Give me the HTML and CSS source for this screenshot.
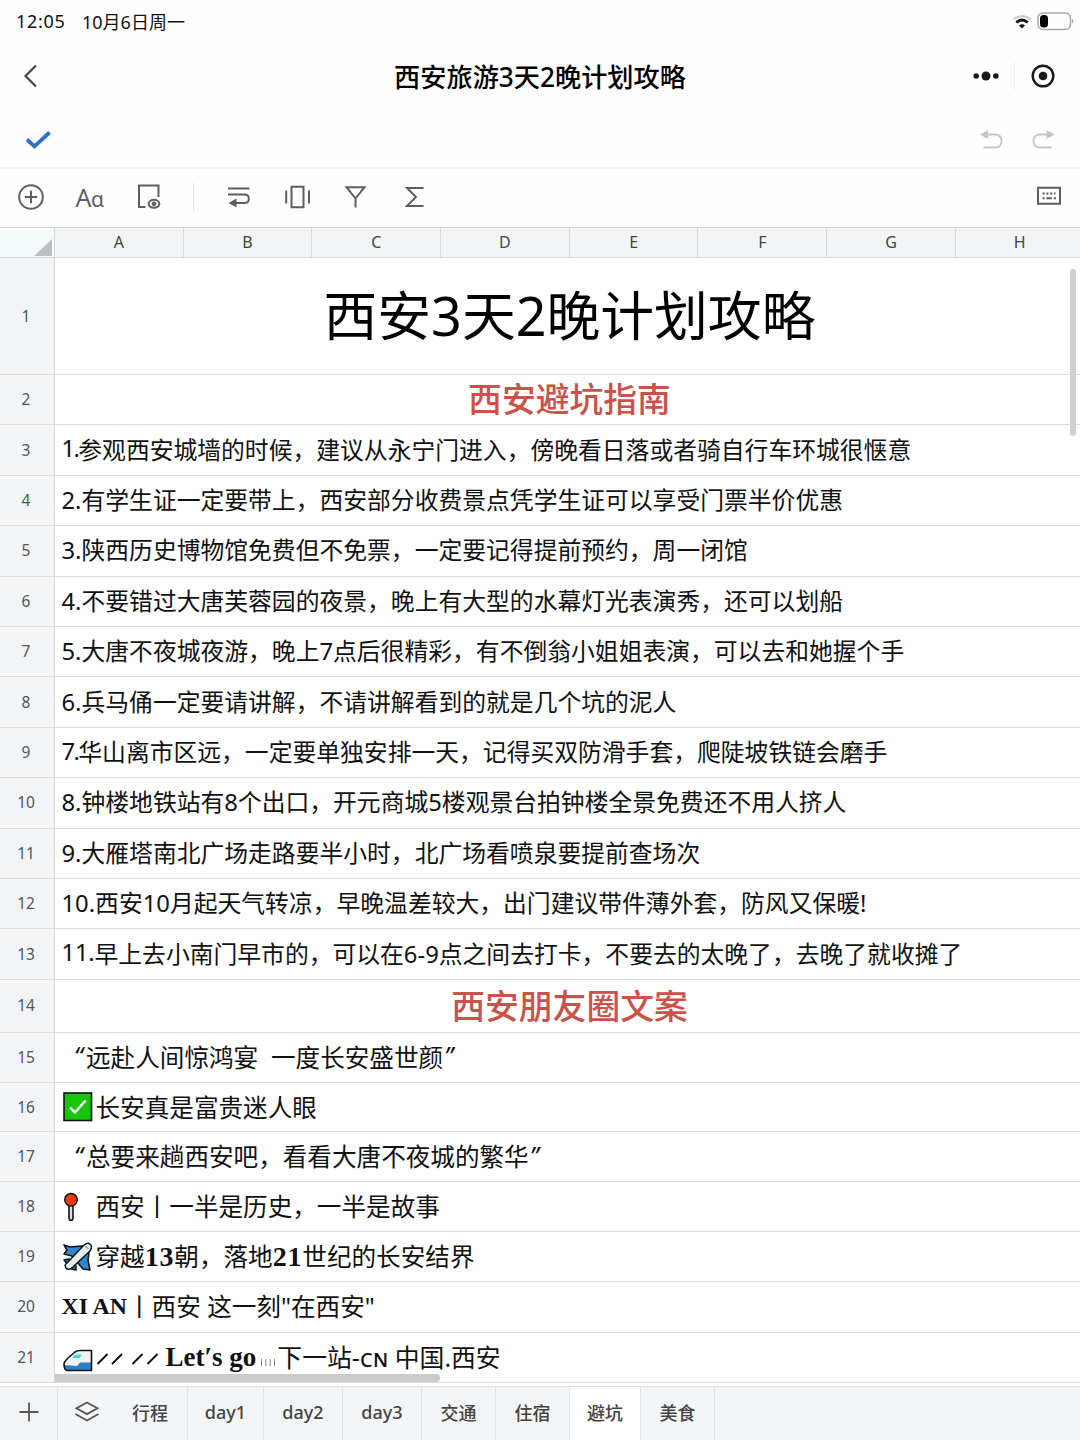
FILE: index.html
```html
<!DOCTYPE html>
<html lang="zh-CN">
<head>
    <meta charset="UTF-8">
    <title>西安旅游3天2晚计划攻略</title>
    <link rel="stylesheet" href="styles.css">
</head>
<body>
    <div class="status-bar">
        <span class="time">12:05</span>
        <span class="date">10月6日周一</span>
        <svg class="wifi" width="20" height="16" viewBox="0 0 20 16" fill="none">
            <path d="M1.5 5.5Q10 -1.5 18.5 5.5" stroke="#c8c8c8" stroke-width="2"/>
            <path d="M4.3 8.5Q10 3.6 15.7 8.5" stroke="#111" stroke-width="2.8"/>
            <path d="M7 11.5Q10 9 13 11.5L10 14.5Z" fill="#111"/>
        </svg>
        <svg class="battery" width="38" height="19" viewBox="0 0 38 19">
            <rect x="1" y="1" width="32.5" height="16.5" rx="5" fill="none" stroke="#aaa" stroke-width="1.5"/>
            <rect x="3" y="3" width="8" height="12.5" rx="3.5" fill="#000"/>
            <path d="M35 7Q37.5 9.3 35 11.5Z" fill="#999"/>
        </svg>
    </div>

    <div class="nav-bar">
        <svg class="back" width="16" height="26" viewBox="0 0 16 26" fill="none" stroke="#444" stroke-width="2.2">
            <path d="M13 2.5L2.5 13L13 23.5"/>
        </svg>
        <h1>西安旅游3天2晚计划攻略</h1>
        <div class="capsule">
            <svg width="28" height="28" viewBox="0 0 28 28" fill="#1a1a1a">
                <circle cx="4.2" cy="14" r="2.8"/><circle cx="14" cy="14" r="4.5"/><circle cx="23.8" cy="14" r="2.8"/>
            </svg>
            <span class="capsule-line"></span>
            <svg width="28" height="28" viewBox="0 0 28 28">
                <circle cx="14" cy="14" r="10.3" fill="none" stroke="#1a1a1a" stroke-width="2.4"/>
                <circle cx="14" cy="14" r="4.3" fill="#1a1a1a"/>
            </svg>
        </div>
    </div>

    <div class="edit-bar">
        <svg width="28" height="22" viewBox="0 0 28 22" fill="none" stroke="#2f6fca" stroke-width="3.8">
            <path d="M3 10.5L10.5 17.5L25.5 3.5"/>
        </svg>
        <div class="history">
            <svg width="24" height="22" viewBox="0 0 24 22" fill="none" stroke="#c6c6c6" stroke-width="1.8">
                <path d="M6 5.5H14.5Q21.5 5.5 21.5 12T14.5 18.5H3.5"/>
                <path d="M0 5.5L8 1V10Z" fill="#c6c6c6" stroke="none"/>
            </svg>
            <svg width="24" height="22" viewBox="0 0 24 22" fill="none" stroke="#c6c6c6" stroke-width="1.8">
                <path d="M16 5.5H8.5Q1.5 5.5 1.5 12T8.5 18.5H19.5"/>
                <path d="M22.5 5.5L14.5 1V10Z" fill="#c6c6c6" stroke="none"/>
            </svg>
        </div>
    </div>

    <div class="toolbar">
        <svg class="tool" viewBox="0 0 28 28">
            <circle cx="14" cy="14" r="11.8"/><path d="M14 7.8V20.2M7.8 14H20.2"/>
        </svg>
        <span class="tool tool-font">A<small>ɑ</small></span>
        <svg class="tool" viewBox="0 0 28 28">
            <path d="M11.5 24H5V2.5H24.5V14"/>
            <ellipse cx="20" cy="20.8" rx="5.4" ry="4"/><circle cx="20" cy="20.8" r="1.4"/>
        </svg>
        <span class="tool-line"></span>
        <svg class="tool" viewBox="0 0 28 28">
            <path d="M4 5.5H25.5M4 11.5H20.5Q24.8 11.5 24.8 15.8T20.5 20H9"/>
            <path class="solid" d="M4.5 20L12.5 15.6V24.4Z"/>
        </svg>
        <svg class="tool" viewBox="0 0 28 28">
            <path d="M8.5 3.8H20.5V24.2H8.5ZM3.2 7.5V20.5M26 7.5V20.5"/>
        </svg>
        <svg class="tool" viewBox="0 0 28 28">
            <path d="M5.5 4.2H23.5L14.5 15.5ZM14.5 14V24.5"/>
        </svg>
        <svg class="tool" viewBox="0 0 28 28">
            <path d="M23.5 5H7L16 14L7 23H23.5"/>
        </svg>
        <svg class="tool keyboard" viewBox="0 0 28 28">
            <path d="M3 4.8H25V20.8H3Z"/>
            <path d="M7.5 10.6H20.5" stroke-dasharray="2.2 1.6"/>
            <path d="M7.5 15.2H9.7M11.3 15.2H17M18.8 15.2H21"/>
        </svg>
    </div>

    <div class="sheet">
        <div class="columns">
            <div class="corner">
                <svg width="18" height="17" viewBox="0 0 18 17"><path d="M18 0V17H0Z" fill="#bdbfc0"/></svg>
            </div>
            <div class="col">A</div>
            <div class="col">B</div>
            <div class="col">C</div>
            <div class="col">D</div>
            <div class="col">E</div>
            <div class="col">F</div>
            <div class="col">G</div>
            <div class="col">H</div>
        </div>

        <div class="row row-title"><div class="num">1</div><div class="cell">西安3天2晚计划攻略</div></div>
        <div class="row row-heading"><div class="num">2</div><div class="cell">西安避坑指南</div></div>
        <div class="row"><div class="num">3</div><div class="cell"><span class="tight">1.</span>参观西安城墙的时候，建议从永宁门进入，傍晚看日落或者骑自行车环城很惬意</div></div>
        <div class="row"><div class="num">4</div><div class="cell">2.有学生证一定要带上，西安部分收费景点凭学生证可以享受门票半价优惠</div></div>
        <div class="row"><div class="num">5</div><div class="cell">3.陕西历史博物馆免费但不免票，一定要记得提前预约，周一闭馆</div></div>
        <div class="row"><div class="num">6</div><div class="cell">4.不要错过大唐芙蓉园的夜景，晚上有大型的水幕灯光表演秀，还可以划船</div></div>
        <div class="row"><div class="num">7</div><div class="cell">5.大唐不夜城夜游，晚上7点后很精彩，有不倒翁小姐姐表演，可以去和她握个手</div></div>
        <div class="row"><div class="num">8</div><div class="cell">6.兵马俑一定要请讲解，不请讲解看到的就是几个坑的泥人</div></div>
        <div class="row"><div class="num">9</div><div class="cell"><span class="tight">7.</span>华山离市区远，一定要单独安排一天，记得买双防滑手套，爬陡坡铁链会磨手</div></div>
        <div class="row"><div class="num">10</div><div class="cell">8.钟楼地铁站有8个出口，开元商城5楼观景台拍钟楼全景免费还不用人挤人</div></div>
        <div class="row"><div class="num">11</div><div class="cell">9.大雁塔南北广场走路要半小时，北广场看喷泉要提前查场次</div></div>
        <div class="row"><div class="num">12</div><div class="cell">10.西安10月起天气转凉，早晚温差较大，出门建议带件薄外套，防风又保暖!</div></div>
        <div class="row"><div class="num">13</div><div class="cell"><span class="eleven">11.</span>早上去小南门早市的，可以在6-9点之间去打卡，不要去的太晚了，去晚了就收摊了</div></div>
        <div class="row row-heading row-second"><div class="num">14</div><div class="cell">西安朋友圈文案</div></div>
        <div class="row row-short copy"><div class="num">15</div><div class="cell quote"><span class="mark">“</span>远赴人间惊鸿宴  一度长安盛世颜<span class="mark">”</span></div></div>
        <div class="row row-short copy">
            <div class="num">16</div>
            <div class="cell">
                <svg class="emoji" viewBox="0 0 30 30">
                    <rect x="1" y="1" width="27.5" height="27.5" fill="#16c60c" stroke="#111" stroke-width="1.6"/>
                    <path d="M7 15.5L12 20.5L22.5 8.5" fill="none" stroke="#fff" stroke-width="2.4"/>
                </svg>
                <span>长安真是富贵迷人眼</span>
            </div>
        </div>
        <div class="row row-short copy"><div class="num">17</div><div class="cell quote"><span class="mark">“</span>总要来趟西安吧，看看大唐不夜城的繁华<span class="mark">”</span></div></div>
        <div class="row row-short copy">
            <div class="num">18</div>
            <div class="cell">
                <svg class="emoji" viewBox="0 0 30 30">
                    <path d="M6 12V26Q6 28.3 8 28.3T10 26V12Z" fill="#ddd" stroke="#111" stroke-width="1.6"/>
                    <circle cx="8" cy="7.8" r="6.3" fill="#f03a17" stroke="#111" stroke-width="1.4"/>
                </svg>
                <span>西安丨一半是历史，一半是故事</span>
            </div>
        </div>
        <div class="row copy">
            <div class="num">19</div>
            <div class="cell">
                <svg class="emoji" viewBox="0 0 30 30" stroke="#111" stroke-width="1.5" stroke-linejoin="round">
                    <path d="M1 3L7 5L19 4L26 11L25 18L27 28L20 27L14 20L9 14L1 12L4 8Z" fill="#2f86d2"/>
                    <path d="M1 18L6 17L13 24V28L8 27Z" fill="#2f86d2"/>
                    <path d="M4 21L20 4Q24 0 27 2T27 9L10 25Q5 29 3 26T4 21Z" fill="#e7edf0"/>
                    <path d="M22 3.8L25.5 7" stroke="#58c8ed" stroke-width="1.6"/>
                </svg>
                <span>穿越<b>13</b>朝，落地<b>21</b>世纪的长安结界</span>
            </div>
        </div>
        <div class="row copy"><div class="num">20</div><div class="cell"><b class="caps">XI AN</b>丨西安 这一刻"在西安"</div></div>
        <div class="row copy">
            <div class="num">21</div>
            <div class="cell">
                <svg class="emoji train" viewBox="0 0 30 30" stroke-linejoin="round">
                    <path d="M1 20Q1 18 5 14L12 8Q14 6.5 17 6.5H28.5V26.5H4Q1 26 1 20Z" fill="#f0f2f4"/>
                    <path d="M1 21L14 22L17 18.5H28.5V26.5H4Q1 26 1 21Z" fill="#327ec4"/>
                    <path d="M12 10.5H19L16.5 14H9Z" fill="#40d4ef"/>
                    <path d="M1 20Q1 18 5 14L12 8Q14 6.5 17 6.5H28.5V26.5H4Q1 26 1 20Z" fill="none" stroke="#111" stroke-width="1.6"/>
                </svg>
                <svg class="dashes" width="70" height="24" viewBox="0 0 70 24" stroke="#111" stroke-width="1.9">
                    <path d="M1.5 19L11.5 9M16 19L26 9M36.5 19L46.5 9M51.5 19L61.5 9"/>
                </svg>
                <b class="go">Let′s go</b>
                <svg class="ticks" width="21" height="24" viewBox="0 0 21 24" stroke="#888" stroke-width="1">
                    <path d="M5.5 14V21M9.8 14V21M14.2 14V21M18.5 14V21"/>
                </svg>
                <span class="next">下一站-ᴄɴ 中国.西安</span>
            </div>
        </div>
        <div class="scroll-y"></div>
        <div class="scroll-x"></div>
    </div>

    <div class="tabs">
        <div class="tab add">
            <svg width="20" height="20" viewBox="0 0 20 20" fill="none" stroke="#555" stroke-width="1.8"><path d="M10 .5V19.5M.5 10H19.5"/></svg>
        </div>
        <div class="tab layers">
            <svg width="26" height="24" viewBox="0 0 26 24" fill="none" stroke="#555" stroke-width="1.8">
                <path d="M13 2.5L23.5 8.3L13 14.1L2.5 8.3ZM1.5 14L13 20.5L24.5 14"/>
            </svg>
        </div>
        <div class="tab first">行程</div>
        <div class="tab day1">day1</div>
        <div class="tab day">day2</div>
        <div class="tab day">day3</div>
        <div class="tab place">交通</div>
        <div class="tab place">住宿</div>
        <div class="tab active">避坑</div>
        <div class="tab last">美食</div>
    </div>
</body>
</html>
```
FILE: styles.css
```css
* {
    box-sizing: border-box;
}
body {
    font-family: "Noto Sans", "Noto Sans CJK SC", sans-serif;
    margin: 0;
    width: 1080px;
    height: 1440px;
    overflow: hidden;
    background-color: #fefefe;
    color: #111;
}
svg {
    display: block;
    flex-shrink: 0;
}
.status-bar {
    display: flex;
    align-items: center;
    height: 43px;
    padding: 0 5px 0 16px;
    font-size: 18px;
}
.time {
    width: 66px;
    padding-bottom: 1px;
    letter-spacing: 0.7px;
}
.date {
    padding-bottom: 2px;
}
.wifi {
    margin-left: auto;
    margin-right: 5px;
}
.nav-bar {
    display: flex;
    align-items: center;
    justify-content: space-between;
    height: 66px;
    padding: 0 23px;
}
.nav-bar h1 {
    margin: 1px 0 0 69px;
    font-size: 26.2px;
    font-weight: 500;
    color: #000;
    line-height: 36px;
}
.capsule {
    display: flex;
    align-items: center;
    width: 85px;
    justify-content: space-between;
}
.capsule-line {
    width: 1px;
    height: 28px;
    background-color: #f0f0f0;
}
.edit-bar {
    display: flex;
    align-items: center;
    justify-content: space-between;
    height: 60px;
    padding: 3px 24px 0;
    border-bottom: 2px solid #f5f5f5;
}
.history {
    display: flex;
    gap: 28px;
}
.toolbar {
    display: flex;
    align-items: center;
    gap: 30.5px;
    height: 58px;
    padding: 0 17px 2px;
}
.tool {
    width: 28px;
    height: 28px;
    fill: none;
    stroke: #5c5e60;
    stroke-width: 2;
}
.tool .solid {
    fill: #5c5e60;
    stroke: none;
}
.tool-font {
    font-size: 25px;
    line-height: 29px;
    letter-spacing: -0.5px;
    white-space: nowrap;
    color: #5c5e60;
}
.tool-font small {
    font-size: 21px;
}
.tool-line {
    width: 1px;
    height: 28px;
    background-color: #e2e2e2;
}
.keyboard {
    margin-left: auto;
}

/* sheet */
.sheet {
    position: relative;
    height: 1159px;
    overflow: hidden;
    background-color: #fff;
}
.columns {
    display: flex;
    height: 31px;
    background-color: #f3f4f6;
    border-top: 1px solid #d5d7d9;
    border-bottom: 1px solid #d5d7d9;
}
.corner {
    display: flex;
    flex: 0 0 55px;
    align-items: flex-end;
    justify-content: flex-end;
    padding: 0 2px 1px 0;
    background-color: #f5fafb;
    border-right: 1px solid #d5d7d9;
}
.col {
    flex: 0 0 128.7px;
    border-right: 1px solid #d5d7d9;
    font-size: 16px;
    line-height: 29px;
    text-align: center;
    color: #444;
}
.row {
    display: flex;
    height: 50.42px;
    border-bottom: 1px solid #dcdcdc;
    font-size: 23.8px;
}
.num {
    display: flex;
    flex: 0 0 55px;
    align-items: center;
    justify-content: center;
    padding: 0 2px 1px 0;
    background-color: #f3f4f6;
    border-right: 1px solid #d5d7d9;
    font-size: 15.5px;
    color: #555;
}
.cell {
    display: flex;
    flex: 0 0 1030px;
    align-items: center;
    padding: 0 0 4px 6.5px;
    white-space: pre;
    color: #111;
}
.tight {
    letter-spacing: -1.6px;
}
.eleven {
    letter-spacing: -0.2px;
}
.row-title {
    height: 117px;
}
.row-title .cell {
    justify-content: center;
    padding: 0 1px 6px 0;
    font-size: 53.8px;
    color: #000;
}
.row-heading .cell {
    justify-content: center;
    padding: 0 1px 4px 0;
    font-size: 33.8px;
    font-weight: 500;
    color: #c9524a;
}
.row-second {
    height: 53px;
}
.row-second .cell {
    padding-bottom: 2px;
}
.row-short {
    height: 49.75px;
}

/* captions at the bottom are a bit larger */
.copy {
    font-size: 24.6px;
}
.copy .cell {
    padding-bottom: 3px;
}
.copy .quote {
    padding-left: 18px;
}
.mark {
    width: 13px;
    margin-left: -1px;
    margin-right: 1px;
    font-style: italic;
    text-align: center;
}
.emoji {
    width: 30px;
    height: 30px;
    margin: 3px 3px 0 1px;
}
.cell .train {
    margin-top: 7px;
}
.dashes,
.ticks {
    margin-top: 3px;
}
.cell b {
    font-family: "Liberation Serif", serif;
    font-size: 28px;
    line-height: 30px;
    letter-spacing: 0.8px;
}
.cell .caps {
    padding-top: 2px;
    font-size: 23.8px;
    letter-spacing: 0;
}
.cell .go {
    padding-top: 2px;
    font-size: 27px;
    letter-spacing: 0;
}
.next {
    font-size: 24.8px;
}
.scroll-y {
    position: absolute;
    top: 42px;
    right: 4px;
    width: 6px;
    height: 167px;
    border-radius: 3px;
    background-color: #d0d0d0;
}
.scroll-x {
    position: absolute;
    left: 55px;
    bottom: 4px;
    width: 385px;
    height: 8px;
    border-radius: 0 4px 4px 0;
    background-color: #cbcbcb;
}

/* sheet tabs */
.tabs {
    display: flex;
    height: 54px;
    background-color: #f3f5f7;
    border-top: 1px solid #e0e2e3;
}
.tab {
    display: flex;
    align-items: center;
    justify-content: center;
    padding-bottom: 4px;
    border-right: 1px solid #e2e5e6;
    font-size: 18px;
    font-weight: 500;
    color: #444;
}
.add {
    width: 58px;
}
.layers {
    width: 58px;
    border-right: none;
}
.first {
    width: 72px;
    padding-right: 3px;
}
.day1 {
    width: 76px;
}
.day {
    width: 79px;
}
.place {
    width: 74px;
}
.active {
    width: 71px;
    background-color: #fff;
}
.last {
    width: 74px;
}
```
